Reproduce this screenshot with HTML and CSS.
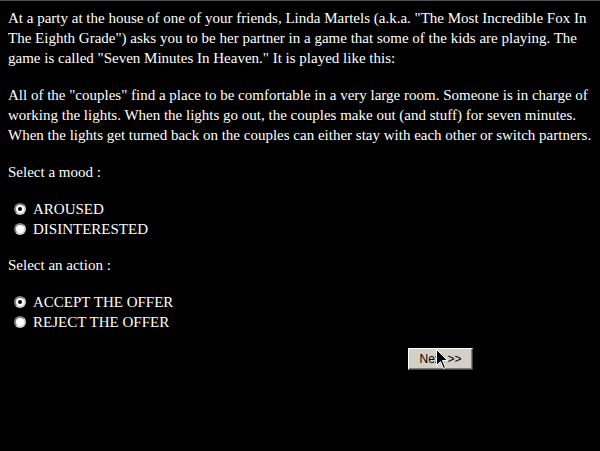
FILE: index.html
```html
<!DOCTYPE html>
<html>
<head>
<meta charset="utf-8">
<link rel="stylesheet" href="styles.css">
</head>
<body>
<p class="para">At a party at the house of one of your friends, Linda Martels (a.k.a. "The Most Incredible Fox In The Eighth Grade") asks you to be her partner in a game that some of the kids are playing. The game is called "Seven Minutes In Heaven." It is played like this:</p>
<p class="para">All of the "couples" find a place to be comfortable in a very large room. Someone is in charge of working the lights. When the lights go out, the couples make out (and stuff) for seven minutes. When the lights get turned back on the couples can either stay with each other or switch partners.</p>
<p class="para">Select a mood :</p>
<div class="group">
  <label class="opt"><span class="radio checked"></span>AROUSED</label>
  <label class="opt"><span class="radio"></span>DISINTERESTED</label>
</div>
<p class="para">Select an action :</p>
<div class="group">
  <label class="opt"><span class="radio checked"></span>ACCEPT THE OFFER</label>
  <label class="opt"><span class="radio"></span>REJECT THE OFFER</label>
</div>
<div class="actions">
  <button class="btn">Next &gt;&gt;</button>
  <svg class="cursor" width="13" height="21" viewBox="0 0 13 21"><path d="M0.5 0.5 L0.5 16.5 L4.5 12.5 L7.5 19.5 L9.5 18.5 L6.5 11.5 L11.5 11.5 Z" fill="#000" stroke="#fff" stroke-width="1"/></svg>
</div>
</body>
</html>
```
FILE: styles.css
```css
html {
  background: #000;
  border-top: 1px solid #505050;
}
body {
  margin: 7px 4px 8px 8px;
  color: #fff;
  font-family: "Liberation Serif", "Times New Roman", serif;
  font-size: 15px;
  line-height: 20px;
}
.para {
  margin: 0 0 17px 0;
}
.group {
  margin: 0 0 16px 0;
  padding-left: 6px;
  display: flex;
  flex-direction: column;
}
.opt {
  display: flex;
  align-items: center;
  height: 20px;
}
.radio {
  box-sizing: border-box;
  width: 12px;
  height: 12px;
  border-radius: 50%;
  background: #fff;
  border: 2px solid #808080;
  border-right-color: #d4d0c8;
  border-bottom-color: #d4d0c8;
  margin-right: 7px;
  display: flex;
  align-items: center;
  justify-content: center;
}
.radio.checked::after {
  content: "";
  width: 4px;
  height: 4px;
  border-radius: 50%;
  background: #000;
}
.actions {
  position: relative;
  padding-left: 400px;
}
.btn {
  box-sizing: border-box;
  width: 65px;
  height: 22px;
  background: #d4d0c8;
  border: 1px solid;
  border-color: #fff #404040 #404040 #fff;
  box-shadow: inset -1px -1px 0 #808080;
  font-family: "Liberation Sans", Arial, sans-serif;
  font-size: 12px;
  color: #000;
  padding: 0;
}
.cursor {
  position: absolute;
  left: 428px;
  top: 1px;
}
```
